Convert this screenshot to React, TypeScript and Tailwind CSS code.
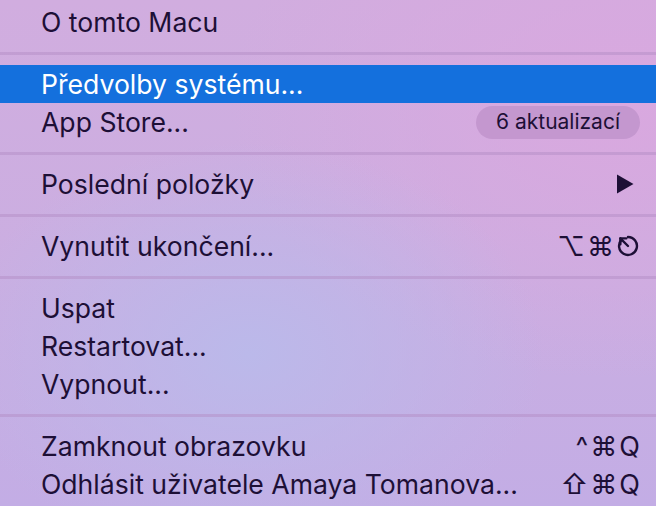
import React from "react";

const font = { fontFamily: '"Inter", "DejaVu Sans", sans-serif' };

const EscGlyph = () => (
  <svg width="24" height="24" viewBox="0 0 22 22" fill="none" stroke="currentColor" strokeWidth="2.2" strokeLinecap="round" strokeLinejoin="round">
    <path d="M5.2 5.2 A8.2 8.2 0 1 0 11 2.8" />
    <path d="M4 4 L11 11" />
    <path d="M4 9.5 L4 4 L9.5 4" />
  </svg>
);

const Separator = () => (
  <div className="pt-[11px] pb-[10px]">
    <div className="h-[3px] bg-[#b48ec6]/50" />
  </div>
);

type RowProps = {
  label: string;
  active?: boolean;
  right?: React.ReactNode;
};

const Row = ({ label, active, right }: RowProps) => (
  <div
    className={
      active
        ? "flex h-[38px] items-center justify-between bg-[#1470dd] pl-[41px] pr-[16px] text-white"
        : "flex h-[38px] items-center justify-between pl-[41px] pr-[16px] text-[#1d0f36]"
    }
  >
    <span className="text-[26.6px] leading-none">{label}</span>
    {right}
  </div>
);

const Shortcut = ({ children }: { children: React.ReactNode }) => (
  <span className="flex items-center gap-[2px] text-[27px] leading-none text-[#1d0f36]">
    {children}
  </span>
);

export default function App() {
  return (
    <div
      style={font}
      className="h-[506px] w-[656px] overflow-hidden bg-[radial-gradient(ellipse_45%_42%_at_38%_70%,#bbb9ea_0%,rgba(187,185,234,0)_100%),radial-gradient(ellipse_60%_55%_at_95%_20%,#d9a8df_0%,rgba(217,168,223,0)_100%),linear-gradient(180deg,#d1addf_0%,#cbaee1_50%,#c3ade5_100%)] pt-[3px]"
    >
      <Row label="O tomto Macu" />
      <Separator />
      <Row label="Předvolby systému..." active />
      <Row
        label="App Store..."
        right={
          <span className="flex h-[33px] items-center rounded-full bg-[#c497cf] px-[20px] text-[21px] text-[#1d0f36]">
            6 aktualizací
          </span>
        }
      />
      <Separator />
      <Row
        label="Poslední položky"
        right={
          <svg width="18" height="20" viewBox="0 0 18 20" className="mr-[6px]">
            <path d="M1 0.5 L17.5 10 L1 19.5 Z" fill="#1d0f36" />
          </svg>
        }
      />
      <Separator />
      <Row
        label="Vynutit ukončení..."
        right={
          <Shortcut>
            <span>⌥</span>
            <span>⌘</span>
            <EscGlyph />
          </Shortcut>
        }
      />
      <Separator />
      <Row label="Uspat" />
      <Row label="Restartovat..." />
      <Row label="Vypnout..." />
      <Separator />
      <Row
        label="Zamknout obrazovku"
        right={
          <Shortcut>
            <span>^</span>
            <span>⌘</span>
            <span>Q</span>
          </Shortcut>
        }
      />
      <Row
        label="Odhlásit uživatele Amaya Tomanova..."
        right={
          <Shortcut>
            <span>⇧</span>
            <span>⌘</span>
            <span>Q</span>
          </Shortcut>
        }
      />
    </div>
  );
}
